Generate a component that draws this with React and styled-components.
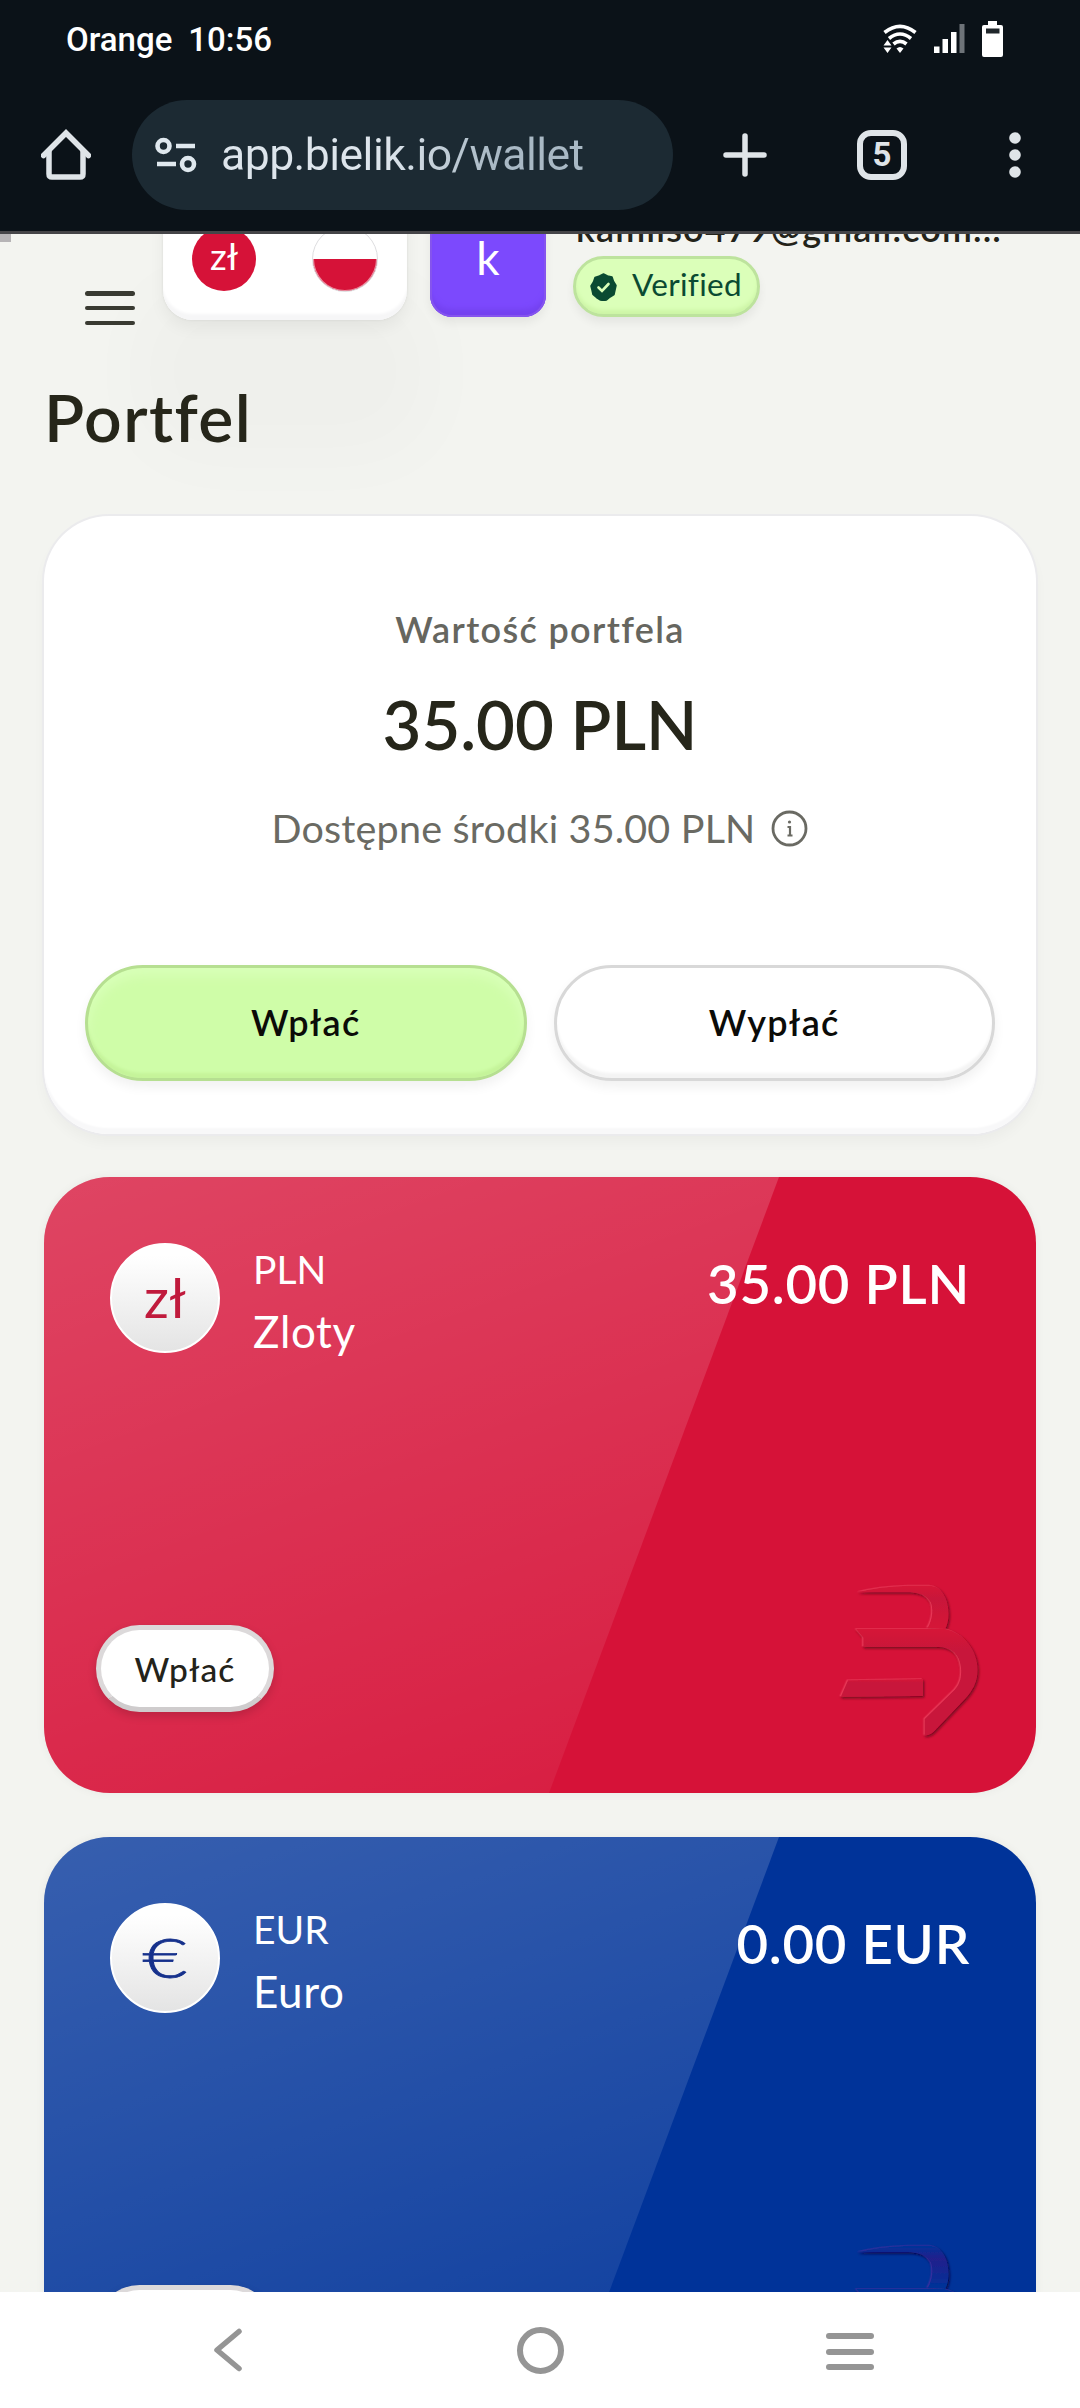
import React from "react";
import styled, { createGlobalStyle } from "styled-components";

const Global = createGlobalStyle`
  * { box-sizing: border-box; }
  html, body { margin: 0; padding: 0; }
  body { background: #f3f4f0; font-family: Lato, "Open Sans", sans-serif; }
  button { font-family: inherit; padding: 0; cursor: pointer; }
`;

const Screen = styled.div`
  width: 1080px;
  height: 2408px;
  display: flex;
  flex-direction: column;
  overflow: hidden;
  background: #f3f4f0;
`;

const BrowserChrome = styled.header`
  height: 234px;
  flex: none;
  background: #0b1218;
  border-bottom: 3px solid #454548;
  font-family: Roboto, sans-serif;
`;

const StatusBar = styled.div`
  height: 78px;
  padding: 1px 77px 0 66px;
  display: flex;
  align-items: center;
  justify-content: space-between;
`;

const Carrier = styled.div`
  display: flex;
  gap: 16px;
  padding-top: 1px;
  color: #fff;
  font-size: 33px;
  font-weight: 500;
  line-height: 40px;
`;

const StatusIcons = styled.div`
  display: flex;
  align-items: center;
  gap: 17px;
  padding-bottom: 2px;
`;

const Toolbar = styled.div`
  height: 153px;
  display: flex;
  align-items: center;
  padding: 0 57px 0 41px;
`;

const UrlPill = styled.div`
  width: 541px;
  height: 110px;
  margin: 0 50px 0 41px;
  border-radius: 55px;
  background: #1c2a33;
  display: flex;
  align-items: center;
  gap: 24px;
  padding-left: 22px;
`;

const Url = styled.span`
  font-size: 44.5px;
  letter-spacing: -0.53px;
  line-height: 56px;
  background: linear-gradient(90deg, #dde5ec 45%, #a9b9c5 75%);
  background-clip: text;
  -webkit-background-clip: text;
  color: transparent;
`;

const TabCount = styled.div`
  width: 50px;
  height: 50px;
  margin: 0 102px 0 90px;
  border: 6px solid #dfe4e8;
  border-radius: 14px;
  color: #dfe4e8;
  font-size: 33px;
  font-weight: 700;
  line-height: 38px;
  text-align: center;
`;

const Page = styled.main`
  height: 2058px;
  flex: none;
  overflow: hidden;
  padding: 0 44px;
  position: relative;
`;

const LoadMark = styled.div`
  position: absolute;
  left: 0;
  top: 0;
  width: 11px;
  height: 8px;
  background: #b6b4b6;
`;

const TopBar = styled.div`
  height: 96px;
  display: flex;
  align-items: flex-end;
`;

const MenuButton = styled.div`
  width: 50px;
  height: 34px;
  margin: 0 28px 5px 41px;
  display: flex;
  flex-direction: column;
  justify-content: space-between;
  position: relative;
`;

const Line = styled.i`
  height: ${(p) => p.$h}px;
  border-radius: 3px;
  background: ${(p) => p.$c};
`;

const LocaleCard = styled.div`
  width: 244px;
  height: 122px;
  margin: 0 23px 10px 0;
  padding: 0 29px;
  flex: none;
  display: flex;
  align-items: center;
  justify-content: space-between;
  border-radius: 30px;
  background: #fff;
  box-shadow: 0 0 3px rgba(0, 0, 0, 0.08), 0 8px 16px rgba(0, 0, 0, 0.05),
    0 112px 80px 26px rgba(0, 0, 0, 0.018), inset 0 -7px 3px -1px #f6f6f7;
`;

const Coin = styled.div`
  width: 64px;
  height: 64px;
  border-radius: 50%;
  background: #d61238;
  color: #fff;
  font-size: 37px;
  line-height: 58px;
  text-align: center;
`;

const Flag = styled.div`
  width: 66px;
  height: 66px;
  border-radius: 50%;
  border: 1px solid #dedee0;
  background: linear-gradient(#fff 50%, #d61238 50%);
  box-shadow: inset 0 0 0 1px #fff8;
`;

const Avatar = styled.div`
  width: 116px;
  height: 116px;
  margin: 0 27px 13px 0;
  flex: none;
  border-radius: 22px;
  background: #7c49fd;
  color: #fff;
  font-size: 46px;
  line-height: 114px;
  text-align: center;
  box-shadow: inset 0 0 0 2px #8554ee, inset 0 -9px 5px -1px #7442f0,
    0 6px 10px rgba(0, 0, 0, 0.06);
`;

const Account = styled.div`
  margin-bottom: 13px;
  display: flex;
  flex-direction: column;
  align-items: flex-start;
`;

const Email = styled.div`
  margin-left: 3px;
  font-size: 36px;
  font-weight: 600;
  line-height: 44px;
  letter-spacing: 1.15px;
  white-space: nowrap;
  color: #23231a;
`;

const Verified = styled.div`
  height: 61px;
  width: 187px;
  margin-top: 6px;
  display: flex;
  align-items: center;
  gap: 15px;
  padding-left: 14px;
  border: 3px solid #bde39d;
  border-radius: 31px;
  background: #dbffb9;
  color: #0a4a32;
  font-size: 31.5px;
  line-height: 38px;
  letter-spacing: 0.3px;
  box-shadow: inset 0 -5px 4px -1px #cdf5a6, 0 6px 10px rgba(0, 0, 0, 0.06);
  span { padding-bottom: 5px; }
`;

const Title = styled.h1`
  margin: 47px 0 59px;
  font-size: 66px;
  font-weight: 600;
  line-height: 80px;
  letter-spacing: 1.4px;
  color: #26261a;
`;

const Summary = styled.section`
  height: 618px;
  padding: 91px 41px 0;
  border-radius: 65px;
  background: #fff;
  display: flex;
  flex-direction: column;
  align-items: center;
  position: relative;
  box-shadow: 0 0 0 2px #ebebed, 0 8px 14px rgba(0, 0, 0, 0.035),
    inset 0 -7px 2px -1px #f8f8f9;
`;

const SummaryLabel = styled.div`
  font-size: 36px;
  font-weight: 600;
  line-height: 44px;
  letter-spacing: 1.35px;
  color: #66665f;
`;

const SummaryAmount = styled.div`
  margin-top: 33px;
  font-size: 67px;
  font-weight: 600;
  line-height: 80px;
  color: #26261a;
`;

const Available = styled.div`
  margin-top: 40px;
  display: flex;
  align-items: center;
  gap: 16px;
  font-size: 39.5px;
  letter-spacing: 0.18px;
  line-height: 48px;
  color: #6a6a63;
`;

const Actions = styled.div`
  width: 100%;
  margin-top: 113px;
  display: grid;
  grid-template-columns: 1fr 1fr;
  gap: 27px;
`;

const ActionButton = styled.button`
  height: 116px;
  padding-bottom: 3px;
  border-radius: 58px;
  border: 3px solid ${(p) => (p.$primary ? "#b6df91" : "#d8d8d8")};
  background: ${(p) => (p.$primary ? "#cffda8" : "#fff")};
  color: #0b0b08;
  font-size: 36px;
  font-weight: 600;
  line-height: 44px;
  letter-spacing: 1.3px;
  box-shadow: inset 0 -6px 3px -1px ${(p) => (p.$primary ? "#c5f49a" : "#f4f4f4")},
    inset 0 8px 12px ${(p) => (p.$primary ? "#d8ffb8" : "#fff")},
    0 6px 12px rgba(0, 0, 0, 0.06);
`;

const CurrencyCard = styled.article`
  height: 616px;
  margin-top: ${(p) => p.$gap}px;
  border-radius: 66px;
  overflow: hidden;
  background: ${(p) => p.$color};
  color: #fff;
  position: relative;
  display: flex;
  flex-direction: column;
  justify-content: space-between;
  box-shadow: 0 0 10px rgba(0, 30, 30, 0.05);
  &::before {
    content: "";
    position: absolute;
    inset: 0 257px 0 0;
    clip-path: polygon(0 0, 100% 0, 505px 100%, 0 100%);
    background: linear-gradient(160deg, rgba(255, 255, 255, 0.215), rgba(255, 255, 255, 0.04));
  }
`;

const CardTop = styled.div`
  position: relative;
  display: flex;
  padding: 66px 66px 0;
`;

const Symbol = styled.div`
  width: 110px;
  height: 110px;
  border-radius: 50%;
  border: 2px solid #fff;
  background: linear-gradient(#fff 10%, #e4e4e4);
  color: ${(p) => p.$ink};
  font-size: 55px;
  font-weight: ${(p) => (p.$stretch ? 300 : 400)};
  line-height: 104px;
  text-align: center;
  span {
    display: inline-block;
    transform: scaleX(${(p) => p.$stretch || 1});
    -webkit-text-stroke: ${(p) => (p.$stretch ? 0.8 : 0)}px currentColor;
  }
`;

const Names = styled.div`
  margin-left: 33px;
  padding-top: 2px;
  display: flex;
  flex-direction: column;
`;

const Code = styled.span`
  font-size: 39px;
  line-height: 48px;
`;

const Name = styled.span`
  margin-top: 8px;
  font-size: 44px;
  line-height: 60px;
  letter-spacing: 0.6px;
`;

const Balance = styled.div`
  margin-left: auto;
  margin-top: 7px;
  font-size: 54.5px;
  font-weight: 600;
  line-height: 66px;
  letter-spacing: 0.75px;
`;

const CardBottom = styled.div`
  position: relative;
  display: flex;
  justify-content: space-between;
  align-items: flex-end;
  padding: 0 53px 50px 52px;
`;

const DepositButton = styled.button`
  width: 178px;
  height: 87px;
  margin-bottom: 31px;
  border-radius: 44px;
  border: 5px solid #dcd9da;
  border-bottom-color: #cfcccd;
  background: #fff;
  color: #23231a;
  font-size: 33.5px;
  font-weight: 500;
  line-height: 40px;
  letter-spacing: 1.1px;
  box-shadow: 0 4px 10px rgba(0, 0, 0, 0.15);
`;

const NavBar = styled.nav`
  height: 116px;
  flex: none;
  background: #fff;
  display: grid;
  grid-template-columns: 304px 309px 48px;
  align-items: center;
  padding-left: 213px;
`;

const NavMenu = styled.div`
  width: 48px;
  height: 37px;
  margin-top: 3px;
  display: flex;
  flex-direction: column;
  justify-content: space-between;
`;

function WifiIcon() {
  return (
    <svg width="34" height="29" viewBox="0 0 34 29" fill="none">
      <g stroke="#fff" strokeWidth="3.6">
        <path d="M1.5 8.5Q17 -3.8 32.5 8.5" />
        <path d="M6 14.5Q17 5.5 28 14.5" />
        <path d="M10.5 20Q17 14.6 23.5 20" />
      </g>
      <path d="M13.5 24.5Q17 21.5 20.5 24.5L17 29Z" fill="#fff" />
      <path d="M4.5 14.500L10 21.500V29H0V20Z" fill="#0b1218" />
      <path d="M4.5 16L8.500 21.500H.5ZM.5 23.500H8.500L4.500 29Z" fill="#fff" />
    </svg>
  );
}

function SignalIcon() {
  return (
    <svg width="31" height="29" viewBox="0 0 31 29" fill="#fff">
      <rect x="0" y="22.500" width="5.500" height="6.500" />
      <rect x="8.500" y="15" width="5.500" height="14" />
      <rect x="17" y="8" width="5.500" height="21" />
      <rect x="25.500" y="0" width="5" height="29" fill="#6e7378" />
    </svg>
  );
}

function BatteryIcon() {
  return (
    <svg width="21" height="36" viewBox="0 0 21 36">
      <path d="M6 0H15V4H19Q21 4 21 6V34Q21 36 19 36H2Q0 36 0 34V6Q0 4 2 4H6Z" fill="#fff" />
      <rect x="4" y="7.500" width="13.500" height="5" fill="#20262b" />
    </svg>
  );
}

function HomeIcon() {
  return (
    <svg width="50" height="52" viewBox="0 0 50 52" fill="none" stroke="#dfe4e8" strokeWidth="5.500">
      <path d="M2.500 26.500L25 4L47.500 26.500" strokeLinecap="round" />
      <path d="M8 22V45Q8 48 11 48H39Q42 48 42 45V22" />
    </svg>
  );
}

function SiteIcon() {
  return (
    <svg width="43" height="36" viewBox="0 0 43 36" fill="none" stroke="#dfe8ee" strokeWidth="4.600">
      <circle cx="9.500" cy="9" r="6" />
      <path d="M22 9H41M3 27H22" />
      <circle cx="34" cy="27" r="6" />
    </svg>
  );
}

function PlusIcon() {
  return (
    <svg width="44" height="44" viewBox="0 0 44 44" stroke="#dfe4e8" strokeWidth="5.500" strokeLinecap="round">
      <path d="M22 3V41M3 22H41" />
    </svg>
  );
}

function DotsIcon() {
  return (
    <svg width="12" height="46" viewBox="0 0 12 46" fill="#dfe4e8">
      <circle cx="6" cy="6" r="5.800" />
      <circle cx="6" cy="23" r="5.800" />
      <circle cx="6" cy="40" r="5.800" />
    </svg>
  );
}

function VerifiedIcon() {
  return (
    <svg width="27" height="28" viewBox="0 0 27 28">
      <path
        d="M13.500 1L17.500 3L22 4L23.500 8.500L26 12.500L25 17L24 21.500L20 24L16.500 27L13.500 27.500L10.500 27L6.500 24.500L3 21.500L2 17L1 13L3.500 9L5 4.500L9.500 3Z"
        fill="#0a4a32"
        stroke="#0a4a32"
        strokeWidth="1.500"
        strokeLinejoin="round"
      />
      <path d="M8.500 14.500L12 18L18.500 11" fill="none" stroke="#dbffb9" strokeWidth="2.600" strokeLinecap="round" />
    </svg>
  );
}

function InfoIcon() {
  return (
    <svg width="37" height="37" viewBox="0 0 37 37" fill="none" stroke="#6a6a63" strokeWidth="2.800">
      <circle cx="18.500" cy="18.500" r="16.500" />
      <path d="M16.500 17H19V25.500M16.500 25.500H21.500" strokeWidth="2.200" />
      <circle cx="18.500" cy="12" r="1.600" fill="#6a6a63" stroke="none" />
    </svg>
  );
}

function BielikMark({ id, base, fill, light, dark }) {
  return (
    <svg width="145" height="160" viewBox="178 130 435 480">
      <defs>
        <filter id={id} x="-10%" y="-15%" width="120%" height="130%">
          <feDropShadow dx="-4" dy="-2" stdDeviation="2" floodColor={light} floodOpacity="0.8" />
          <feDropShadow dx="4" dy="5" stdDeviation="3" floodColor={dark} />
        </filter>
        <linearGradient id={`${id}-hook`} x1="0" y1="0" x2="0" y2="1">
          <stop offset="0" stopColor={base} />
          <stop offset="0.3" stopColor={fill} />
          <stop offset="1" stopColor={base} />
        </linearGradient>
        <linearGradient id={`${id}-body`} x1="0" y1="0" x2="0" y2="1">
          <stop offset="0" stopColor={base} />
          <stop offset="0.2" stopColor={fill} />
          <stop offset="1" stopColor={fill} />
        </linearGradient>
      </defs>
      <g filter={`url(#${id})`}>
        <path fill={`url(#${id}-hook)`} d="M237 158Q300 140 390 138H455C495 142 510 185 510 222Q510 248 500 268L446 266C463 240 464 205 456 188Q440 160 398 158Z" />
        <path fill={`url(#${id}-body)`} d="M232 268H500C560 282 597 335 597 390C597 430 580 455 560 477L470 572Q456 588 438 588V538L528 450C545 432 549 410 547 385C543 345 520 322 480 322H254V294Z" />
        <path fill={`url(#${id}-body)`} d="M208 422L433 418V469L186 472Z" />
      </g>
    </svg>
  );
}

function BackIcon() {
  return (
    <svg width="30" height="44" viewBox="0 0 30 44" fill="none" stroke="#959595" strokeWidth="5.500" strokeLinecap="round" strokeLinejoin="round">
      <path d="M26 3.500L4 22L26 40.500" />
    </svg>
  );
}

function CircleIcon() {
  return (
    <svg width="47" height="47" viewBox="0 0 47 47" fill="none" stroke="#959595" strokeWidth="6">
      <circle cx="23.500" cy="23.500" r="20.500" />
    </svg>
  );
}

const wallets = [
  {
    code: "PLN", name: "Zloty", symbol: "zł", balance: "35.00 PLN",
    color: "#d61238", ink: "#c01a3c", fill: "#c8143a", light: "#f0405f", dark: "#7d0a22",
  },
  {
    code: "EUR", name: "Euro", symbol: "€", stretch: 1.4, balance: "0.00 EUR",
    color: "#003399", ink: "#16318c", fill: "#221f8c", light: "#4030a4", dark: "#081150",
  },
];

export default function App() {
  return (
    <Screen>
      <Global />
      <BrowserChrome>
        <StatusBar>
          <Carrier>
            <span>Orange</span>
            <span>10:56</span>
          </Carrier>
          <StatusIcons>
            <WifiIcon />
            <SignalIcon />
            <BatteryIcon />
          </StatusIcons>
        </StatusBar>
        <Toolbar>
          <HomeIcon />
          <UrlPill>
            <SiteIcon />
            <Url>app.bielik.io/wallet</Url>
          </UrlPill>
          <PlusIcon />
          <TabCount>5</TabCount>
          <DotsIcon />
        </Toolbar>
      </BrowserChrome>

      <Page>
        <LoadMark />
        <TopBar>
          <MenuButton>
            <Line $h={4.5} $c="#393a32" />
            <Line $h={4.5} $c="#393a32" />
            <Line $h={4.5} $c="#393a32" />
          </MenuButton>
          <LocaleCard>
            <Coin>zł</Coin>
            <Flag />
          </LocaleCard>
          <Avatar>k</Avatar>
          <Account>
            <Email>kamilso479@gmail.com...</Email>
            <Verified>
              <VerifiedIcon />
              <span>Verified</span>
            </Verified>
          </Account>
        </TopBar>

        <Title>Portfel</Title>

        <Summary>
          <SummaryLabel>Wartość portfela</SummaryLabel>
          <SummaryAmount>35.00 PLN</SummaryAmount>
          <Available>
            <span>Dostępne środki 35.00 PLN</span>
            <InfoIcon />
          </Available>
          <Actions>
            <ActionButton $primary>Wpłać</ActionButton>
            <ActionButton>Wypłać</ActionButton>
          </Actions>
        </Summary>

        {wallets.map((w) => (
          <CurrencyCard key={w.code} $color={w.color} $gap={w.code === "PLN" ? 43 : 44}>
            <CardTop>
              <Symbol $ink={w.ink} $stretch={w.stretch}>
                <span>{w.symbol}</span>
              </Symbol>
              <Names>
                <Code>{w.code}</Code>
                <Name>{w.name}</Name>
              </Names>
              <Balance>{w.balance}</Balance>
            </CardTop>
            <CardBottom>
              <DepositButton>Wpłać</DepositButton>
              <BielikMark id={`mark-${w.code}`} base={w.color} fill={w.fill} light={w.light} dark={w.dark} />
            </CardBottom>
          </CurrencyCard>
        ))}
      </Page>

      <NavBar>
        <BackIcon />
        <CircleIcon />
        <NavMenu>
          <Line $h={6} $c="#959595" />
          <Line $h={6} $c="#959595" />
          <Line $h={6} $c="#959595" />
        </NavMenu>
      </NavBar>
    </Screen>
  );
}
